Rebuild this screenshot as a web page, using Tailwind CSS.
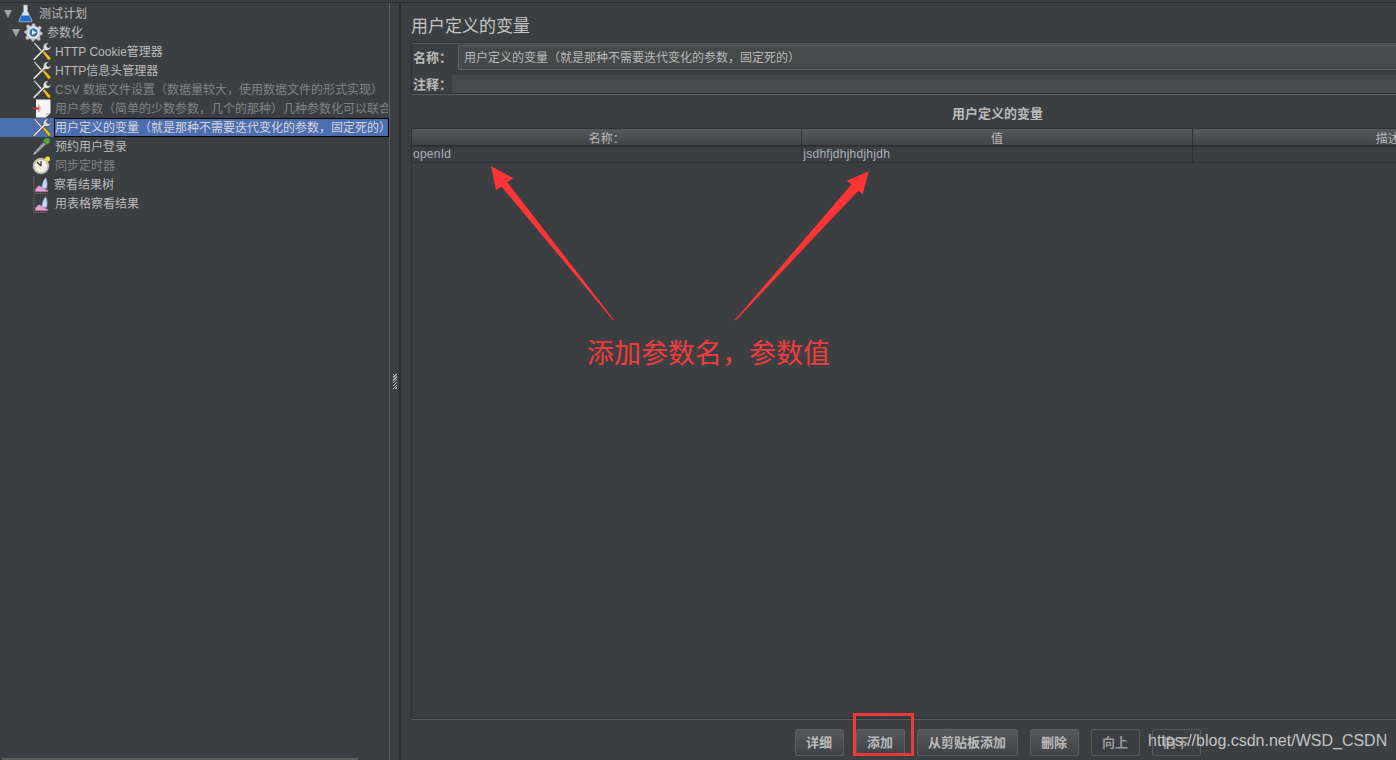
<!DOCTYPE html>
<html lang="zh-CN">
  <head>
    <meta charset="UTF-8" />
    <title>用户定义的变量</title>
    <script src="https://cdn.jsdelivr.net/npm/@tailwindcss/browser@4"></script>
  </head>
  <body class="bg-[#3c3f41]">
    <svg width="0" height="0" class="absolute">
      <symbol id="tools" viewBox="0 0 20 20">
        <path d="M1.500 1 L3 .5 L11 9 L9.500 10.500 Z" fill="#e4e4e4" stroke="#2a2a2a" stroke-width=".5" />
        <path d="M10.800 10.800 L12.600 9 L19.500 16.200 C20 17 19.800 18 19 18.800 C18.200 19.500 17.200 19.300 16.600 18.600 Z" fill="#f2c21c" stroke="#2a2400" stroke-width=".6" />
        <path d="M1 18 L11.800 7 C11.200 4 12.800 1.200 16 .8 L17.500 1 L15.200 3.400 L16 5.400 L18 6 L20 3.800 C20.300 7.500 17.300 9.800 13.400 8.800 L2.600 19.600 L1.600 19.300 Z" fill="#dcdcdc" stroke="#1e1e1e" stroke-width=".5" />
      </symbol>
      <symbol id="graph" viewBox="0 0 16 20">
        <path d="M0.500 1 V19.500 H15" fill="none" stroke="#777" stroke-width="1" stroke-dasharray="1.500 1" />
        <path d="M2 17.500 V15 C4 13 5 11 7 11.500 C9 12.500 10 14 15 16 V17.500 Z" fill="#ea9ed6" stroke="#b0609a" stroke-width=".6" />
        <path d="M9 13 C9 9 11 5 13 3 C14.500 6 15 10 14 14 C12 15 10 14 9 13 Z" fill="#c4d6f4" stroke="#7a94c8" stroke-width=".6" />
      </symbol>
    </svg>

    <div class="relative flex h-[760px] w-[1396px] flex-col overflow-hidden font-['Liberation_Sans','Noto_Sans_CJK_SC',sans-serif] text-[12px] text-[#bbbbbb]">
      <div class="mt-[2px] h-[1px] shrink-0 bg-[#2b2d2e]"></div>
      <div class="flex min-h-0 flex-1">
        <!-- test plan tree -->
        <aside class="relative w-[390px] shrink-0 overflow-hidden border-r border-[#606365] pt-[1px]">
          <div class="flex h-[19px] items-center">
            <span class="ml-[4px] h-0 w-0 border-x-[4px] border-t-[8px] border-x-transparent border-t-[#a0a3a5]"></span>
            <svg class="ml-[6px] h-[19px] w-[15px]" viewBox="0 0 15 19">
              <path d="M5.500 1 H9.500 V7 L14 16 C14.500 17.500 13.500 18 12.500 18 H2.500 C1.500 18 .5 17.500 1 16 L5.500 7 Z" fill="#dfe6ee" stroke="#8a96a6" stroke-width=".7" />
              <path d="M3.500 11.500 H11.500 L13.500 16.500 C13.500 17.300 13 17.500 12.500 17.500 H2.500 C2 17.500 1.500 17.300 1.500 16.500 Z" fill="#1f6fd0" />
            </svg>
            <span class="ml-[6px]">测试计划</span>
          </div>
          <div class="flex h-[19px] items-center">
            <span class="ml-[12px] h-0 w-0 border-x-[4px] border-t-[8px] border-x-transparent border-t-[#a0a3a5]"></span>
            <svg class="ml-[4px] h-[19px] w-[19px]" viewBox="0 0 19 19">
              <path d="M8 0.500 H11 L11.500 3 L13.800 4 L16 2.700 L17.800 5 L16.200 7 L17 9 L18.700 9.500 V11.500 L16.700 12.300 L15.800 14.300 L16.800 16.500 L14.500 18 L12.500 16.300 L10.500 17 L10 18.700 H8 L7.500 16.800 L5.300 15.900 L3 17 L1.200 14.800 L2.700 12.800 L2 10.700 L.3 10 V8 L2.300 7.300 L3 5.200 L2 3 L4.300 1.300 L6 3 L7.800 2.500 Z" fill="#c9ccd0" stroke="#666" stroke-width=".6" />
              <circle cx="9.500" cy="9.500" r="5.500" fill="#f4f6f8" />
              <circle cx="9.500" cy="9.500" r="4.200" fill="#3d6fb8" />
              <path d="M8 7 L12.500 9.500 L8 12 Z" fill="#dce8f8" />
            </svg>
            <span class="ml-[4px]">参数化</span>
          </div>
          <div class="flex h-[19px] items-center pl-[32px]">
            <svg class="h-[19px] w-[19px] shrink-0"><use href="#tools" /></svg>
            <span class="ml-[4px]">HTTP Cookie管理器</span>
          </div>
          <div class="flex h-[19px] items-center pl-[32px]">
            <svg class="h-[19px] w-[19px] shrink-0"><use href="#tools" /></svg>
            <span class="ml-[4px]">HTTP信息头管理器</span>
          </div>
          <div class="flex h-[19px] items-center pl-[32px] text-[#808386]">
            <svg class="h-[19px] w-[19px] shrink-0"><use href="#tools" /></svg>
            <span class="ml-[4px] whitespace-nowrap">CSV 数据文件设置（数据量较大，使用数据文件的形式实现）</span>
          </div>
          <div class="flex h-[19px] w-[388px] items-center overflow-hidden pl-[32px] text-[#808386]">
            <svg class="h-[19px] w-[19px] shrink-0" viewBox="0 0 19 19">
              <path d="M4 .5 H18.500 V14 L14 18.500 H4 Z" fill="#f6f6f6" />
              <path d="M18.500 14 L14 18.500 V14 Z" fill="#cfcfcf" />
              <path d="M0.500 9.500 H7" fill="none" stroke="#c62020" stroke-width="2" />
              <path d="M6 6 A4 4 0 0 1 6 13" fill="none" stroke="#e8a0a0" stroke-width="1.500" />
            </svg>
            <span class="ml-[4px] whitespace-nowrap">用户参数（简单的少数参数，几个的那种）几种参数化可以联合</span>
          </div>
          <div class="flex h-[19px] items-center bg-[#4b6eaf] pl-[32px]">
            <svg class="h-[19px] w-[19px] shrink-0"><use href="#tools" /></svg>
            <span class="ml-[3px] flex h-[19px] min-w-0 flex-1 items-center overflow-hidden whitespace-nowrap border border-black text-[#d4d8de]">用户定义的变量（就是那种不需要迭代变化的参数，固定死的）</span>
          </div>
          <div class="flex h-[19px] items-center pl-[32px]">
            <svg class="h-[19px] w-[19px] shrink-0" viewBox="0 0 19 19">
              <path d="M13 1.500 C14 .5 16 .5 17.500 2 C18.500 3.500 18 5 17 6 L15 8 L11 4 Z" fill="#5aa844" stroke="#2e6a24" stroke-width=".6" />
              <path d="M11.500 5 L14 7.500 L5 16 L3 14 Z" fill="#9aa4ac" stroke="#444" stroke-width=".6" />
              <path d="M3 14 L5 16 L.8 18.300 Z" fill="#d0d0d0" stroke="#555" stroke-width=".4" />
            </svg>
            <span class="ml-[4px]">预约用户登录</span>
          </div>
          <div class="flex h-[19px] items-center pl-[32px] text-[#808386]">
            <svg class="h-[19px] w-[19px] shrink-0" viewBox="0 0 19 19">
              <circle cx="9" cy="10" r="8.500" fill="#c8c4b4" stroke="#444" stroke-width=".8" />
              <circle cx="9" cy="10" r="6.300" fill="#f2efe4" />
              <path d="M9 10 L5 6 M9 10 V5" stroke="#333" stroke-width="1.200" />
              <circle cx="15.500" cy="3" r="2.500" fill="#f2e24a" />
            </svg>
            <span class="ml-[4px]">同步定时器</span>
          </div>
          <div class="flex h-[19px] items-center pl-[33px]">
            <svg class="h-[19px] w-[16px] shrink-0"><use href="#graph" /></svg>
            <span class="ml-[5px]">察看结果树</span>
          </div>
          <div class="flex h-[19px] items-center pl-[33px]">
            <svg class="h-[19px] w-[16px] shrink-0"><use href="#graph" /></svg>
            <span class="ml-[6px]">用表格察看结果</span>
          </div>
          <div class="absolute bottom-0 left-[2px] h-[2px] w-[356px] bg-[#5d5d5a]"></div>
        </aside>

        <!-- splitter -->
        <div class="flex w-[9px] shrink-0 items-center justify-center">
          <div class="h-[15px] w-[4px] bg-[repeating-linear-gradient(135deg,#e8e8e8_0,#e8e8e8_1px,#3c3f41_1px,#3c3f41_2px)] opacity-70"></div>
        </div>
        <div class="w-[2px] shrink-0 bg-[#2b2d2e]"></div>

        <!-- element panel -->
        <main class="flex w-[1192px] shrink-0 flex-col pl-[10px] pr-[9px]">
          <h1 class="mt-[12px] h-[23px] text-[17px] leading-[23px] text-[#c4c4c4]">用户定义的变量</h1>
          <section class="mt-[4px] h-[52px] shrink-0 border border-[#2f3132] shadow-[inset_0_1px_0_#5a5d5f,0_1px_0_#5a5d5f]">
            <div class="mt-[2px] flex h-[24px] items-center pl-[1px]">
              <span class="w-[45px] pt-[2px] text-[13px] font-bold">名称：</span>
              <div class="flex h-[25px] flex-1 items-center border border-[#5e6264] bg-[#45494a] pl-[5px] pt-[2px]">用户定义的变量（就是那种不需要迭代变化的参数，固定死的）</div>
            </div>
            <div class="mt-[6px] flex h-[18px] items-center pl-[1px]">
              <span class="w-[39px] pt-[2px] text-[13px] font-bold">注释：</span>
              <div class="h-[18px] flex-1 bg-[#45494a]"></div>
            </div>
          </section>
          <div class="flex h-[34px] shrink-0 items-center justify-center pt-[6px] text-[13px] font-bold">用户定义的变量</div>
          <section class="flex h-[591px] shrink-0 flex-col border border-[#2f3132]">
            <div class="grid h-[18px] shrink-0 grid-cols-3 border-b-2 border-[#2f3132] bg-gradient-to-b from-[#55595b] to-[#404446]">
              <div class="flex items-center justify-center border-r border-[#2f3132] pt-[1px]">名称：</div>
              <div class="flex items-center justify-center border-r border-[#2f3132] pt-[1px]">值</div>
              <div class="flex items-center justify-center pt-[1px]">描述</div>
            </div>
            <div class="grid h-[16px] shrink-0 grid-cols-3 border-b border-[#2f3132]">
              <div class="border-r border-[#2f3132] pl-[1px] leading-[14px] tracking-[0.25px] text-[#a8b4bc]">openId</div>
              <div class="border-r border-[#2f3132] pl-[1px] leading-[14px] tracking-[0.25px] text-[#a8b4bc]">jsdhfjdhjhdjhjdh</div>
              <div></div>
            </div>
          </section>
          <div class="h-[1px] shrink-0 bg-[#5a5d5f]"></div>
          <div class="mt-[9px] flex justify-center gap-3 text-[13px]">
            <button class="flex h-[27px] w-[49px] items-center justify-center rounded-[2px] border border-[#5a5e60] bg-gradient-to-b from-[#54585a] to-[#404446] font-bold">详细</button>
            <button class="flex h-[27px] w-[49px] items-center justify-center rounded-[2px] border border-[#5a5e60] bg-gradient-to-b from-[#54585a] to-[#404446] font-bold">添加</button>
            <button class="flex h-[27px] w-[101px] items-center justify-center rounded-[2px] border border-[#5a5e60] bg-gradient-to-b from-[#54585a] to-[#404446] font-bold">从剪贴板添加</button>
            <button class="flex h-[27px] w-[49px] items-center justify-center rounded-[2px] border border-[#5a5e60] bg-gradient-to-b from-[#54585a] to-[#404446] font-bold">删除</button>
            <button class="flex h-[27px] w-[49px] items-center justify-center rounded-[2px] border border-[#55595b] font-bold text-[#999999]">向上</button>
            <button class="flex h-[27px] w-[49px] items-center justify-center rounded-[2px] border border-[#55595b] font-bold text-[#999999]">向下</button>
          </div>
        </main>
      </div>

      <!-- annotations drawn over the screenshot -->
      <svg class="absolute left-0 top-0 h-[760px] w-[1396px]" viewBox="0 0 1396 760">
        <polygon points="491,166 513.300,178.300 507,182 613.800,319.600 612.800,320 501.700,186.700 496,190" fill="#ff3434" />
        <polygon points="868.700,171.300 846.700,180.700 851.700,184.300 734.800,320 735.800,320.400 858.300,190.700 862.700,194.300" fill="#ff3434" />
      </svg>
      <div class="absolute left-[587px] top-[332px] whitespace-nowrap font-['Noto_Sans_CJK_SC',sans-serif] text-[27px] leading-[40px] text-[#f43c3c]">添加参数名，参数值</div>
      <div class="absolute left-[853px] top-[713px] h-[43px] w-[61px] border-[3px] border-[#f03a3a]"></div>
      <div class="absolute left-[1148px] top-[731px] whitespace-nowrap font-['Liberation_Sans',sans-serif] text-[16px] leading-[20px] text-[#c4c4c4]">https://blog.csdn.net/WSD_CSDN</div>
    </div>
  </body>
</html>
